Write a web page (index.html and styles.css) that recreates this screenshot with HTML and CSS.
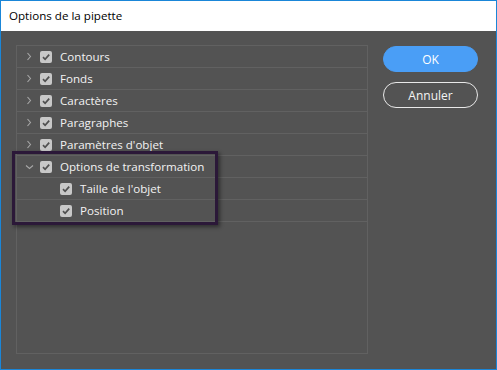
FILE: index.html
```html
<!DOCTYPE html>
<html lang="fr">
<head>
<meta charset="utf-8">
<link rel="stylesheet" href="styles.css">
</head>
<body>
<div class="window">
  <div class="titlebar">Options de la pipette</div>
  <div class="content">
    <div class="panel">
      <div class="row"><span class="chev"><svg viewBox="0 0 6 9"><path d="M1.5 1 L4.5 4.5 L1.5 8"/></svg></span><span class="cb"><svg viewBox="0 0 12 12"><path d="M3 6.2 L5.1 8.3 L9.2 3.6"/></svg></span><span class="label">Contours</span></div>
      <div class="row"><span class="chev"><svg viewBox="0 0 6 9"><path d="M1.5 1 L4.5 4.5 L1.5 8"/></svg></span><span class="cb"><svg viewBox="0 0 12 12"><path d="M3 6.2 L5.1 8.3 L9.2 3.6"/></svg></span><span class="label">Fonds</span></div>
      <div class="row"><span class="chev"><svg viewBox="0 0 6 9"><path d="M1.5 1 L4.5 4.5 L1.5 8"/></svg></span><span class="cb"><svg viewBox="0 0 12 12"><path d="M3 6.2 L5.1 8.3 L9.2 3.6"/></svg></span><span class="label">Caractères</span></div>
      <div class="row"><span class="chev"><svg viewBox="0 0 6 9"><path d="M1.5 1 L4.5 4.5 L1.5 8"/></svg></span><span class="cb"><svg viewBox="0 0 12 12"><path d="M3 6.2 L5.1 8.3 L9.2 3.6"/></svg></span><span class="label">Paragraphes</span></div>
      <div class="row"><span class="chev"><svg viewBox="0 0 6 9"><path d="M1.5 1 L4.5 4.5 L1.5 8"/></svg></span><span class="cb"><svg viewBox="0 0 12 12"><path d="M3 6.2 L5.1 8.3 L9.2 3.6"/></svg></span><span class="label">Paramètres d'objet</span></div>
      <div class="row"><span class="chev down"><svg viewBox="0 0 9 6"><path d="M1 1.5 L4.5 4.5 L8 1.5"/></svg></span><span class="cb"><svg viewBox="0 0 12 12"><path d="M3 6.2 L5.1 8.3 L9.2 3.6"/></svg></span><span class="label">Options de transformation</span></div>
      <div class="row child"><span class="cb"><svg viewBox="0 0 12 12"><path d="M3 6.2 L5.1 8.3 L9.2 3.6"/></svg></span><span class="label">Taille de l'objet</span></div>
      <div class="row child"><span class="cb"><svg viewBox="0 0 12 12"><path d="M3 6.2 L5.1 8.3 L9.2 3.6"/></svg></span><span class="label">Position</span></div>
      <div class="highlight"></div>
    </div>
    <div class="buttons">
      <button class="btn primary">OK</button>
      <button class="btn">Annuler</button>
    </div>
  </div>
</div>
</body>
</html>
```
FILE: styles.css
```css
html, body {
  margin: 0;
  padding: 0;
  background: #535353;
}
.window {
  width: 497px;
  height: 370px;
  box-sizing: border-box;
  border: 1px solid #1a86d8;
  display: flex;
  flex-direction: column;
  font-family: "Open Sans", "Noto Sans", sans-serif;
}
.titlebar {
  height: 30px;
  background: #ffffff;
  color: #000000;
  font-size: 11.6px;
  line-height: 30px;
  padding-left: 8px;
  flex: none;
}
.content {
  flex: 1;
  background: #535353;
  display: flex;
  padding: 14px 17px 15px 15px;
  gap: 15px;
}
.panel {
  position: relative;
  width: 352px;
  height: 309px;
  box-sizing: border-box;
  border: 1px solid #616161;
  flex: none;
}
.row {
  height: 21px;
  border-bottom: 1px solid #616161;
  display: flex;
  align-items: center;
  color: #f2f2f2;
  font-size: 11.6px;
}
.chev {
  width: 23px;
  padding-left: 9px;
  box-sizing: border-box;
  display: flex;
  align-items: center;
}
.chev svg {
  width: 6px;
  height: 9px;
  fill: none;
  stroke: #a8a8a8;
  stroke-width: 1.1;
}
.chev.down {
  padding-left: 8px;
}
.chev.down svg {
  width: 9px;
  height: 6px;
}
.row.child {
  padding-left: 43px;
}
.cb {
  width: 12px;
  height: 12px;
  border-radius: 2px;
  background: #c8c8c8;
  display: inline-flex;
  flex: none;
}
.cb svg {
  width: 12px;
  height: 12px;
  fill: none;
  stroke: #505050;
  stroke-width: 1.7;
}
.label {
  margin-left: 8px;
  white-space: nowrap;
}
.highlight {
  position: absolute;
  left: -5px;
  top: 105px;
  width: 206px;
  height: 74px;
  box-sizing: border-box;
  border: 3px solid #2b1838;
  box-shadow: 2px 2px 4px rgba(0, 0, 0, 0.45);
  pointer-events: none;
}
.buttons {
  display: flex;
  flex-direction: column;
  gap: 10px;
  padding-top: 1px;
}
.btn {
  width: 95px;
  height: 26px;
  border-radius: 13px;
  box-sizing: border-box;
  border: 1px solid #e8e8e8;
  background: transparent;
  color: #f4f4f4;
  font-family: "Open Sans", "Noto Sans", sans-serif;
  font-size: 12px;
  padding: 0;
}
.btn.primary {
  background: #4a9ef6;
  border-color: #4a9ef6;
  color: #ffffff;
}
```
